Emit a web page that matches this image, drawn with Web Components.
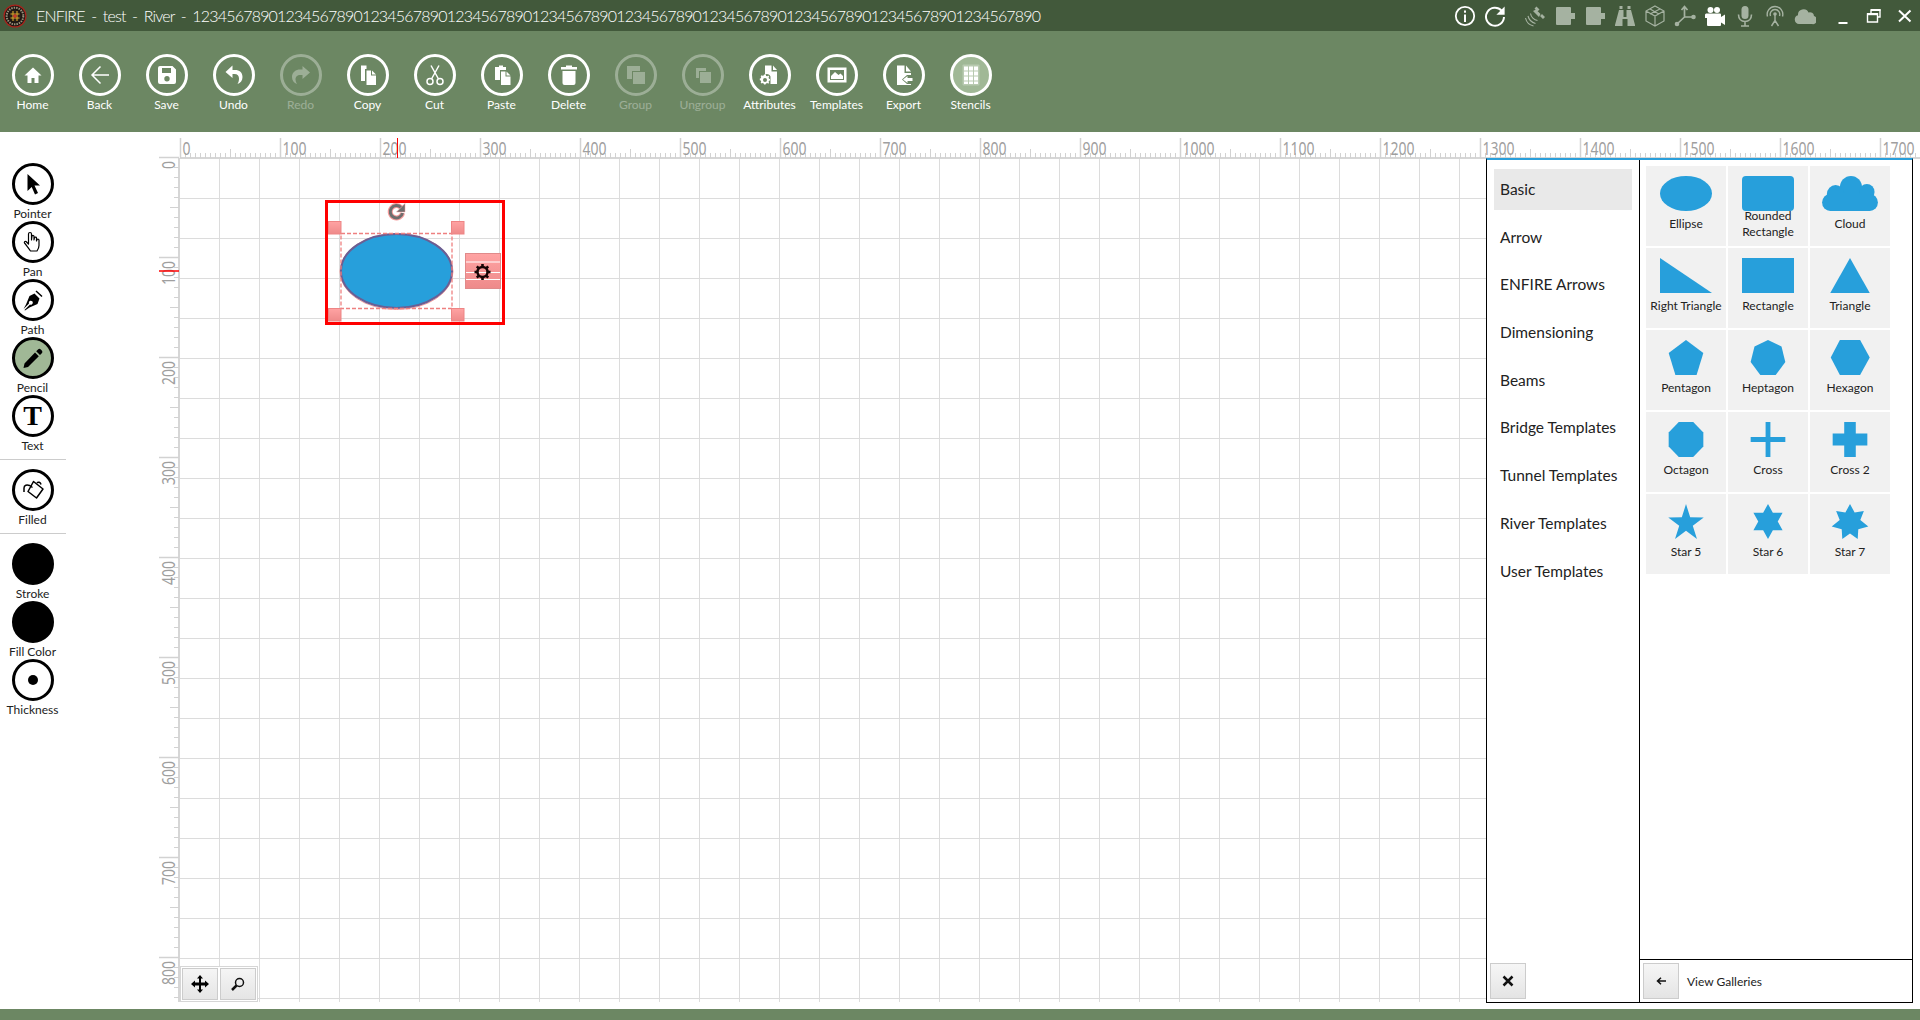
<!DOCTYPE html>
<html>
<head>
<meta charset="utf-8">
<title>ENFIRE</title>
<style>
html, body { margin: 0; height: 100%; overflow: hidden; background: #fff; }
body { display: flex; flex-direction: column; height: 1020px; font-family: Lato, "Noto Sans", sans-serif; color: #222; }
svg { display: block; }
.i { width: 24px; height: 24px; fill: currentColor; }
.s { fill: none; stroke: currentColor; }
.t { width: 22px; height: 22px; fill: currentColor; }
.off { color: #a5b2a1; }
</style>
</head>
<body>

<enfire-titlebar text="ENFIRE - test - River - 1234567890123456789012345678901234567890123456789012345678901234567890123456789012345678901234567890">
  <svg slot="logo" viewBox="0 0 24 24" width="24" height="24">
    <circle cx="12" cy="12" r="11.500" fill="#a8231c"/>
    <circle cx="12" cy="12" r="10.300" fill="#1d1712"/>
    <circle cx="12" cy="12" r="8.300" fill="none" stroke="#9a917d" stroke-width="2" stroke-dasharray="1.500 1"/>
    <circle cx="12" cy="12" r="5.800" fill="#2a211a"/>
    <path d="M7.500 10h9M7.500 14h9M10 7v10M14 7v10" stroke="#d4a72c" stroke-width="1.100"/>
    <circle cx="12" cy="12" r="1.800" fill="#c8372c"/>
  </svg>
  <svg class="t" viewBox="0 0 22 22"><circle class="s" cx="11" cy="11" r="9.200" stroke-width="1.800"/><rect x="10" y="9.500" width="2" height="7.500"/><rect x="10" y="5.500" width="2" height="2.200"/></svg>
  <svg class="t" viewBox="0 0 22 22"><path class="s" stroke-width="2" d="M17.600 5.600A9 9 0 1 0 20 12"/><path d="M20.600 1.500v8.200h-8.200z"/></svg>
  <span style="width:2px"></span>
  <svg class="t off" viewBox="0 0 22 22"><path d="m12.500 1.500 3 3-2 2-3-3zM9 6l3-1.500L16.500 9 15 12zM16 11l2-2 3 3-2 2z"/><g class="s" stroke-width="1.100"><path d="M6.500 8.500c.5 3.500 3.500 6.500 7 7M4 11c1 4 3.500 6.500 7.500 7.500M1.500 13c1 4.500 3.500 7 8 8"/></g></svg>
  <svg class="t off" viewBox="0 0 22 22"><path d="M3 2h13a1 1 0 0 1 1 1v5h4v6h-4v5a1 1 0 0 1-1 1H3a1 1 0 0 1-1-1V3a1 1 0 0 1 1-1z"/></svg>
  <svg class="t off" viewBox="0 0 22 22"><path d="M3 2h13a1 1 0 0 1 1 1v5h4v6h-4v5a1 1 0 0 1-1 1H3a1 1 0 0 1-1-1V3a1 1 0 0 1 1-1z"/></svg>
  <svg class="t off" viewBox="0 0 22 22"><path d="M5.500 1h3v3h-3zM13.500 1h3v3h-3zM5 5h4.500v7h3V5H17l4 15v1h-7.500v-7h-5v7H1v-1z"/></svg>
  <svg class="t off" viewBox="0 0 22 22"><g class="s" stroke-width="1.200"><path d="M11 1l9 5v10l-9 5-9-5V6zM2 6l9 5 9-5M11 11v10M6 4l9 5M16 4 6 9"/></g></svg>
  <svg class="t off" viewBox="0 0 22 22"><g class="s" stroke-width="1.700"><path d="M10.500 12V2M10.500 12 3 19M10.500 12H20M7.500 5l3-3.500L13.500 5"/></g><circle cx="3" cy="19" r="2.300"/><circle cx="19.500" cy="12" r="2.300"/></svg>
  <svg class="t" viewBox="0 0 22 22"><circle cx="6.500" cy="5" r="3"/><circle cx="13" cy="5" r="3"/><path d="M2 8.500h14a1 1 0 0 1 1 1V12l4-2.500V20l-4-2.500V20a1 1 0 0 1-1 1H4a1 1 0 0 1-1-1v-7H1V9.500z"/></svg>
  <svg class="t off" viewBox="0 0 22 22"><rect x="7.500" y="1" width="7" height="13" rx="3.500"/><g class="s" stroke-width="1.600"><path d="M4.500 9.500c0 4 2.500 7 6.500 7s6.500-3 6.500-7M11 16.500V21M7 21h8"/></g></svg>
  <svg class="t off" viewBox="0 0 22 22"><g class="s" stroke-width="1.400"><path d="M3.500 11.500a7.800 7.800 0 1 1 15 0M6.500 11a4.800 4.800 0 1 1 9 0M11 10v8M11 15.500 7.500 21M11 15.500l3.500 5.500"/></g><circle cx="11" cy="9" r="1.800"/></svg>
  <svg class="t off" viewBox="0 0 22 22"><path d="M5 19a4.500 4.500 0 0 1-1-8.800A5.500 5.500 0 0 1 14.500 7.500 4 4 0 0 1 20 11a4 4 0 0 1-2 8z"/></svg>
  <span style="width:4px"></span>
  <svg slot="win" class="t" viewBox="0 0 22 22" style="color:#fff"><rect x="6.500" y="17" width="9" height="2"/></svg>
  <svg slot="win" class="t" viewBox="0 0 22 22" style="color:#fff"><g class="s" stroke-width="1.400"><path d="M8 8V5h9v7h-3M4.500 9h10v8h-10z"/></g><rect x="4" y="8" width="11" height="2.200"/><rect x="8" y="4" width="9.500" height="2"/></svg>
  <svg slot="win" class="t" viewBox="0 0 22 22" style="color:#fff"><path class="s" stroke-width="2" d="M5 5.500 16.500 16.500M16.500 5.500 5 16.500"/></svg>
</enfire-titlebar>

<enfire-toolbar>
  <tool-button label="Home"><svg class="i" viewBox="0 0 24 24"><path d="M12 4.500 3.500 12.500H6.500V20h4v-5h3v5h4v-7.500h3z"/></svg></tool-button>
  <tool-button label="Back"><svg class="i s" viewBox="0 0 24 24" stroke-width="1.500"><path d="M21 12H4.500M12.500 3.500 4 12l8.500 8.500"/></svg></tool-button>
  <tool-button label="Save"><svg class="i" viewBox="0 0 24 24"><path fill-rule="evenodd" d="M5 3h12.500L21 6.500V19a2 2 0 0 1-2 2H5a2 2 0 0 1-2-2V5a2 2 0 0 1 2-2zm2 2v5h9V5zm5 8a2.700 2.700 0 1 0 0 5.400 2.700 2.700 0 0 0 0-5.400z"/></svg></tool-button>
  <tool-button label="Undo"><svg class="i" viewBox="0 0 24 24"><path d="M10.500 2.500 3.500 9l7 6v-4h2c3 0 4.500 2 4.500 4.500 0 2-.5 4-1.500 5.500 3-1 5-3.500 5-7 0-4.500-3-7-7.500-7h-2.500z"/></svg></tool-button>
  <tool-button label="Redo" disabled><svg class="i" viewBox="0 0 24 24"><path d="M13.500 3 21 9.500l-7.500 6.500v-4h-2C8 12 6.500 14 6.500 16.500c0 1.500.5 3 1.500 4.500-3-1-5-3.500-5-7 0-5 4-7.500 8-7.500h2.500z"/></svg></tool-button>
  <tool-button label="Copy"><svg class="i" viewBox="0 0 24 24"><path d="M5 2.500h5.500V6H9v12H5z"/><path d="M10.500 7.500H15v5h5V22h-9.500z"/><path d="M16 7.500l4 4h-4z"/></svg></tool-button>
  <tool-button label="Cut"><svg class="i s" viewBox="0 0 24 24" stroke-width="1.500"><path d="M8 2.500 15.500 16M16 2.500 8.500 16"/><circle cx="7" cy="18.500" r="3"/><circle cx="17" cy="18.500" r="3"/></svg></tool-button>
  <tool-button label="Paste"><svg class="i" viewBox="0 0 24 24"><path d="M9 2.500h4V4h3v3h-6v10H5V4h4z"/><path d="M11 8.500h4.500v5h5V22H11z"/><path d="M16.500 8.500l4 4h-4z"/></svg></tool-button>
  <tool-button label="Delete"><svg class="i" viewBox="0 0 24 24"><path d="M9 2.500h6V4h5v2.500H4V4h5z"/><path d="M5.500 8h13v12a2 2 0 0 1-2 2h-9a2 2 0 0 1-2-2z"/></svg></tool-button>
  <tool-button label="Group" disabled><svg class="i" viewBox="0 0 24 24"><path d="M3 3h13v5H8v8H3z"/><rect x="9" y="9" width="12" height="12"/></svg></tool-button>
  <tool-button label="Ungroup" disabled><svg class="i" viewBox="0 0 24 24"><path d="M5 5h10v3H8v7H5z"/><rect x="9" y="9" width="11" height="11"/></svg></tool-button>
  <tool-button label="Attributes"><svg class="i" viewBox="0 0 24 24"><path d="M7 2.500h6.500v6H19V21h-6.500v-7.500a4 4 0 0 0-5.500-2z"/><path d="M15 2.500l4 4.500h-4z"/><path fill-rule="evenodd" d="M7 13l1.400.3.8-.7 1 1-.6.9.4 1.200 1 .3v1.400l-1 .3-.4 1.200.6.9-1 1-.8-.7-1.400.3-.5 1H5l-.3-1-1.200-.4-.9.6-1-1 .6-.9-.4-1.200-1-.3V15.600l1-.3.4-1.200-.6-.9 1-1 .9.6 1.200-.4.3-1H7zM6 15a2 2 0 1 0 0 4 2 2 0 0 0 0-4z" transform="translate(1 0)"/></svg></tool-button>
  <tool-button label="Templates"><svg class="i" viewBox="0 0 24 24"><path fill-rule="evenodd" d="M2.500 4.500h19v15h-19zM5 7v10h14V7z"/><path d="M6 16v-3l4-4 3.500 3 2-1.500L18 13v3z"/></svg></tool-button>
  <tool-button label="Export"><svg class="i" viewBox="0 0 24 24"><path d="M5 2.500h7.500V10H19v2h-4l-5 4.500 5 4.500h4v1H5z"/><path d="M14 2.500 19 8.500h-5z"/><path d="M11 16.500 15.500 13v2h5v3h-5v2z"/></svg></tool-button>
  <tool-button label="Stencils" active><svg class="i" viewBox="0 0 24 24"><rect x="3.500" y="1.500" width="17" height="21" rx="1" opacity=".25"/><g><rect x="5" y="3.500" width="4" height="4"/><rect x="10" y="3.500" width="4" height="4"/><rect x="15" y="3.500" width="4" height="4"/><rect x="5" y="8.500" width="4" height="4"/><rect x="10" y="8.500" width="4" height="4"/><rect x="15" y="8.500" width="4" height="4"/><rect x="5" y="13.500" width="4" height="4"/><rect x="10" y="13.500" width="4" height="4"/><rect x="15" y="13.500" width="4" height="4"/><rect x="5" y="18.500" width="4" height="2.500"/><rect x="10" y="18.500" width="4" height="2.500"/><rect x="15" y="18.500" width="4" height="2.500"/></g></svg></tool-button>
</enfire-toolbar>

<enfire-workspace>
  <enfire-sidebar slot="side">
    <tool-button dark label="Pointer"><svg class="i" viewBox="0 0 24 24"><path d="M6.500 2 19 13.500h-5.500l3.500 7.500-3 1.500-3.300-7.500L6.500 19z"/></svg></tool-button>
    <tool-button dark label="Pan"><svg class="i" viewBox="0 0 24 24"><path fill="#fff" stroke="#000" stroke-width="1.200" stroke-linejoin="round" d="M9 2.500c1 0 1.500.7 1.500 1.500v6l.5-4c.8-1 2-.6 2 .5V10l.5-2.500c.9-.8 2-.3 2 .7V11l.5-1.500c.9-.7 2-.2 2 .8v5.200c0 2.500-1 4-2 5.500H9.500C8 19 5 14.500 3.500 13c-.6-1 .5-2 1.500-1.500L7.500 14V4c0-1 .6-1.500 1.500-1.500z"/></svg></tool-button>
    <tool-button dark label="Path"><svg class="i" viewBox="0 0 24 24"><path d="M15.500 2.500 21.500 8l-1 1-6-5.500zM13.500 5.500l5 5-2 5.500-8 3.500-4.500 3-.5-.5 5.500-5.500a2 2 0 1 0-1-1L2.500 21 5 16.500l3.500-8.500z"/></svg></tool-button>
    <tool-button dark active label="Pencil"><svg class="i" viewBox="0 0 24 24"><path d="M17 3.500a2 2 0 0 1 2.800 0l1 1a2 2 0 0 1 0 2.800l-1.800 1.700-3.800-3.800zM14 6.500l3.800 3.800L7 21l-4.500 1 1-4.500z"/></svg></tool-button>
    <tool-button dark label="Text"><span style="font:bold 28px/28px 'Liberation Serif',serif;color:#000">T</span></tool-button>
    <hr-line></hr-line>
    <tool-button dark label="Filled"><svg class="i" viewBox="0 0 24 24"><path fill="#fff" stroke="#000" stroke-width="1.500" stroke-linejoin="round" d="M12.500 3.500 22 11l-6.500 9L7 13.500z"/><path class="s" stroke="#000" stroke-width="1.500" d="M3 14V10c0-3 3-3.500 5.500-2.500l3 2M16 5c1-1.500 3.500-1 4 1.500"/></svg></tool-button>
    <hr-line></hr-line>
    <tool-button dark filled label="Stroke"></tool-button>
    <tool-button dark filled label="Fill Color"></tool-button>
    <tool-button dark label="Thickness"><svg viewBox="0 0 10 10" width="10" height="10"><circle cx="5" cy="5" r="5"/></svg></tool-button>
  </enfire-sidebar>

  <drawing-canvas slot="main">
    <selection-frame slot="overlay"></selection-frame>
    <nav-buttons slot="overlay">
      <svg viewBox="0 0 18 18"><path d="M9 0l3 3.500h-2v4h4v-2L18 9l-4 3.500v-2h-4v4h2L9 18l-3-3.500h2v-4H4v2L0 9l4-3.500v2h4v-4H6z"/></svg>
      <svg viewBox="-2 -2 18 18"><g fill="none" stroke="#111"><circle cx="8.500" cy="5.500" r="4" stroke-width="1.500"/><path stroke-width="2.500" d="M5.500 8.500 1 13"/></g></svg>
    </nav-buttons>
    <stencil-panel slot="overlay" active="Basic" items="Basic|Arrow|ENFIRE Arrows|Dimensioning|Beams|Bridge Templates|Tunnel Templates|River Templates|User Templates">
      <stencil-tile label="Ellipse"><svg viewBox="0 0 54 35" preserveAspectRatio="none"><ellipse cx="27" cy="17.500" rx="27" ry="17.500"/></svg></stencil-tile>
      <stencil-tile label="Rounded Rectangle" tight><svg viewBox="0 0 54 35" preserveAspectRatio="none"><rect x="0" width="54" height="35" rx="4"/></svg></stencil-tile>
      <stencil-tile label="Cloud"><svg viewBox="0 0 54 35" preserveAspectRatio="none" style="overflow:visible"><circle cx="28" cy="11.500" r="11.500"/><circle cx="12" cy="18" r="9"/><circle cx="44.500" cy="16" r="8"/><rect x="-2" y="18" width="58" height="17" rx="8.500"/></svg></stencil-tile>
      <stencil-tile label="Right Triangle"><svg viewBox="0 0 54 35" preserveAspectRatio="none"><polygon points="0,0 54,35 0,35"/></svg></stencil-tile>
      <stencil-tile label="Rectangle"><svg viewBox="0 0 54 35" preserveAspectRatio="none"><rect x="0" width="54" height="35"/></svg></stencil-tile>
      <stencil-tile label="Triangle"><svg viewBox="0 0 54 35" preserveAspectRatio="none"><polygon points="27,0 47.500,35 6.500,35"/></svg></stencil-tile>
      <stencil-tile label="Pentagon"><svg viewBox="0 0 54 35" preserveAspectRatio="none"><polygon points="27,0 45,13 38,35 16,35 9,13"/></svg></stencil-tile>
      <stencil-tile label="Heptagon"><svg viewBox="0 0 54 35" preserveAspectRatio="none"><polygon points="27,0 41,6.500 45,22 35,35 19,35 9,22 13,6.500"/></svg></stencil-tile>
      <stencil-tile label="Hexagon"><svg viewBox="0 0 54 35" preserveAspectRatio="none"><polygon points="7,17.500 16.500,0 37.500,0 47.500,17.500 37.500,35 16.500,35"/></svg></stencil-tile>
      <stencil-tile label="Octagon"><svg viewBox="0 0 54 35" preserveAspectRatio="none"><polygon points="19.500,0 34.500,0 45,10.500 45,24.500 34.500,35 19.500,35 9,24.500 9,10.500"/></svg></stencil-tile>
      <stencil-tile label="Cross"><svg viewBox="0 0 54 35" preserveAspectRatio="none"><path d="M24.500 0h5v15H45v5H29.500v15h-5V20H9v-5h15.500z"/></svg></stencil-tile>
      <stencil-tile label="Cross 2"><svg viewBox="0 0 54 35" preserveAspectRatio="none"><path d="M21 0h12v11.500h12v12H33V35H21V23.500H9v-12h12z"/></svg></stencil-tile>
      <stencil-tile label="Star 5"><svg viewBox="0 0 54 35" preserveAspectRatio="none"><polygon points="27,0 31.350,13.360 45.400,13.400 34.040,21.640 38.400,35 27,26.750 15.600,35 19.960,21.640 8.600,13.400 22.650,13.360"/></svg></stencil-tile>
      <stencil-tile label="Star 6"><svg viewBox="0 0 54 35" preserveAspectRatio="none"><polygon points="27,0 32.050,8.750 42.160,8.750 37.100,17.500 42.160,26.250 32.050,26.250 27,35 21.950,26.250 11.840,26.250 16.900,17.500 11.840,8.750 21.950,8.750"/></svg></stencil-tile>
      <stencil-tile label="Star 7"><svg viewBox="0 0 54 35" preserveAspectRatio="none"><polygon points="27,0 31.800,8.500 41.400,6.900 37.700,16 46,22.500 35.600,25.300 35,35 27,29.400 19,35 18.400,25.300 8,22.500 16.300,16 12.600,6.900 22.200,8.500"/></svg></stencil-tile>
    </stencil-panel>
  </drawing-canvas>
</enfire-workspace>

<enfire-footer></enfire-footer>

<script>
const UI_FONT = 'Lato, "Noto Sans", sans-serif';

class EnfireTitlebar extends HTMLElement {
    connectedCallback() {
        this.attachShadow({ mode: 'open' }).innerHTML = `
            <style>
                :host { display: flex; align-items: center; height: 31px; background: #42593b; color: #fff; flex: none; }
                .logo { margin: 0 9px 0 3px; width: 24px; height: 24px; }
                .text { font: 300 16px/31px ${UI_FONT}; letter-spacing: -0.8px; word-spacing: 2.9px; white-space: nowrap; flex: 1; }
                .icons { display: flex; align-items: center; gap: 8px; margin-right: 4px; }
                .win { display: flex; gap: 9px; margin-right: 4px; }
            </style>
            <div class="logo"><slot name="logo"></slot></div>
            <div class="text">${this.getAttribute('text')}</div>
            <div class="icons"><slot></slot></div>
            <div class="win"><slot name="win"></slot></div>
        `;
    }
}

class EnfireToolbar extends HTMLElement {
    connectedCallback() {
        this.attachShadow({ mode: 'open' }).innerHTML = `
            <style>
                :host { display: block; height: 101px; background: #6c8763; color: #fff; flex: none; }
                .row { display: flex; gap: 2px; padding-top: 23px; }
            </style>
            <div class="row"><slot></slot></div>
        `;
    }
}

class ToolButton extends HTMLElement {
    connectedCallback() {
        const label = this.getAttribute('label') || '';
        const line = this.hasAttribute('dark') ? '#000' : '#fff';
        let fill = 'transparent';
        if (this.hasAttribute('active')) fill = '#a0b896';
        if (this.hasAttribute('filled')) fill = '#000';
        this.attachShadow({ mode: 'open' }).innerHTML = `
            <style>
                :host { display: block; width: 65px; height: 58px; color: ${line}; }
                :host([disabled]) { opacity: .33; }
                .ring { box-sizing: border-box; width: 42px; height: 42px; margin: 0 auto; border-radius: 50%;
                        border: 3px solid ${line}; background: ${fill}; display: flex; align-items: center; justify-content: center; }
                .label { margin-top: 1px; height: 15px; font: 12px/16px ${UI_FONT};
                         text-align: center; white-space: nowrap; color: ${this.hasAttribute('dark') ? '#222' : '#fff'}; }
            </style>
            <div class="ring"><slot></slot></div>
            <div class="label">${label}</div>
        `;
    }
}

class HrLine extends HTMLElement {
    connectedCallback() {
        this.attachShadow({ mode: 'open' }).innerHTML = `
            <style>:host { display: block; width: 66px; height: 1px; background: #ccc; margin: 6px 0 9px; }</style>
        `;
    }
}

class EnfireSidebar extends HTMLElement {
    connectedCallback() {
        this.attachShadow({ mode: 'open' }).innerHTML = `
            <style>:host { display: block; width: 66px; flex: none; padding-top: 31px; }</style>
            <slot></slot>
        `;
    }
}

class EnfireWorkspace extends HTMLElement {
    connectedCallback() {
        this.attachShadow({ mode: 'open' }).innerHTML = `
            <style>:host { display: flex; flex: 1; min-height: 0; background: #fff; }</style>
            <slot name="side"></slot>
            <slot name="main"></slot>
        `;
    }
}

class EnfireFooter extends HTMLElement {
    connectedCallback() {
        this.attachShadow({ mode: 'open' }).innerHTML = `
            <style>:host { display: block; height: 11px; background: #6c8763; flex: none; }</style>
        `;
    }
}

// rulers are drawn from numbers so the ticks stay on the 100 unit grid
function rulerMarkup(vertical, length, labels, step) {
    const tick = '#d2d2d2';
    let out = '';
    for (let u = 0; u <= length; u += step) {
        const major = u % 100 === 0;
        const mid = u % 50 === 0;
        const size = major ? 20 : mid ? 9 : 5;
        if (vertical) {
            const y = u - 0.5;
            out += `<line x1="${33 - size}" x2="33" y1="${y}" y2="${y}" stroke="${tick}" stroke-width="${major ? 1.5 : 1}"/>`;
        } else {
            const x = u + 0.5;
            out += `<line x1="${x}" x2="${x}" y1="${26 - size}" y2="26" stroke="${tick}" stroke-width="${major ? 1.5 : 1}"/>`;
        }
    }
    for (let u = 0; u <= labels; u += 100) {
        const len = String(u).length * 8;
        if (vertical) {
            const y = u + 3;
            out += `<text transform="translate(29 ${y}) rotate(-90)" text-anchor="end" textLength="${len}" lengthAdjust="spacingAndGlyphs">${u}</text>`;
        } else {
            out += `<text x="${u + 2.5}" y="23" textLength="${len}" lengthAdjust="spacingAndGlyphs">${u}</text>`;
        }
    }
    return out;
}

class DrawingCanvas extends HTMLElement {
    connectedCallback() {
        this.attachShadow({ mode: 'open' }).innerHTML = `
            <style>
                :host { display: grid; position: relative; flex: 1; min-width: 0; box-sizing: border-box; padding: 0 7px 7px 80px;
                        grid-template-columns: 34px 1fr; grid-template-rows: 27px 1fr; }
                svg { display: block; overflow: visible; }
                text { font: 17.500px "Noto Sans", sans-serif; fill: #9f9f9f; }
                .top { grid-column: 2; grid-row: 1; border-bottom: 2px solid #d6d6d6; height: 25px; margin-right: -7px; overflow: visible; }
                .left { grid-column: 1; grid-row: 2; border-right: 2px solid #d6d6d6; width: 32px; margin-top: -1px; overflow: visible; }
                .surface { grid-column: 2; grid-row: 2; position: relative;
                           background-image: linear-gradient(to left, #dcdcdc 1px, transparent 1px), linear-gradient(to top, #dcdcdc 1px, transparent 1px);
                           background-size: 40px 40px; }
            </style>
            <div class="top"><svg width="1740" height="27">${rulerMarkup(false, 1740, 1700, 5)}<line x1="217.500" x2="217.500" y1="6" y2="26" stroke="#f00"/></svg></div>
            <div class="left"><svg width="34" height="843">${rulerMarkup(true, 840, 800, 10)}<line x1="13" x2="33" y1="113" y2="113" stroke="#f00" stroke-width="1.500"/></svg></div>
            <div class="surface"></div>
            <slot name="overlay"></slot>
        `;
    }
}

class SelectionFrame extends HTMLElement {
    connectedCallback() {
        const handle = (x, y) => `<rect x="${x + .5}" y="${y + .5}" width="12.500" height="12.500" fill="url(#h)" stroke="#ee8585"/>`;
        this.attachShadow({ mode: 'open' }).innerHTML = `
            <style>
                :host { position: absolute; left: 259px; top: 68px; width: 180px; height: 125px; }
                svg { display: block; overflow: visible; }
            </style>
            <svg width="180" height="125" viewBox="0 0 180 125">
                <defs><linearGradient id="h" x1="0" y1="0" x2="0" y2="1"><stop offset="0" stop-color="#ffa3a3"/><stop offset="1" stop-color="#ee8a8a"/></linearGradient></defs>
                <ellipse cx="71.500" cy="71.500" rx="56.500" ry="38" fill="none" stroke="#f59a9a" stroke-width="1"/>
                <ellipse cx="71.500" cy="71" rx="55.500" ry="37" fill="#279fdb" stroke="#6a5f94" stroke-width="2"/>
                <rect x="16" y="33.500" width="111" height="75" fill="none" stroke="#ee8080" stroke-width="1.300" stroke-dasharray="4 2"/>
                <rect x="1.500" y="1.500" width="177" height="122" fill="none" stroke="#f00" stroke-width="3"/>
                ${handle(3, 21)}${handle(126, 21)}${handle(3, 108)}${handle(126, 108)}
                <path d="M76 7.500A6.200 6.200 0 1 0 77.500 13" fill="none" stroke="#f59a9a" stroke-width="5"/>
                <path d="M76 7.500A6.200 6.200 0 1 0 77.500 13" fill="none" stroke="#6e6e6e" stroke-width="3"/>
                <path d="M80 3.500v8.500h-8.500z" fill="#6e6e6e" stroke="#f59a9a" stroke-width=".5"/>
                <rect x="140.500" y="53.500" width="35" height="35" fill="url(#h)" stroke="#e08a8a"/>
                <path d="M141 62h34M141 72.500h34M141 79.500h34" stroke="#fff" stroke-width="1"/>
                <g transform="translate(157.500 72)">
                    <circle r="5" fill="none" stroke="#160404" stroke-width="2.500"/>
                    <path d="M0-8v3M0 8V5M-8 0h3M8 0H5M-5.700-5.700l2 2M5.700 5.700l-2-2M5.700-5.700l-2 2M-5.700 5.700l2-2" stroke="#160404" stroke-width="2.600"/>
                </g>
            </svg>
        `;
    }
}

class NavButtons extends HTMLElement {
    connectedCallback() {
        this.attachShadow({ mode: 'open' }).innerHTML = `
            <style>
                :host { position: absolute; left: 114px; bottom: 7px; display: flex; gap: 2px; padding: 1px; border: 1px solid #d6d6d6; background: #fff; }
                ::slotted(svg) { box-sizing: content-box; width: 18px; height: 18px; padding: 6px 8px; border: 1px solid #ccc; background: linear-gradient(#f5f5f5, #e5e5e5); }
            </style>
            <slot></slot>
        `;
    }
}

class StencilPanel extends HTMLElement {
    connectedCallback() {
        const active = this.getAttribute('active');
        const items = this.getAttribute('items').split('|')
            .map(name => `<div class="item${name === active ? ' on' : ''}">${name}</div>`).join('');
        this.attachShadow({ mode: 'open' }).innerHTML = `
            <style>
                :host { position: absolute; right: 7px; top: 26px; bottom: 6px; width: 427px; box-sizing: border-box; display: flex;
                        background: #fff; border: 1px solid #000; border-top: 2px solid #2a9fdb; font-family: ${UI_FONT}; color: #222; }
                .cats { width: 152px; flex: none; border-right: 1px solid #000; display: flex; flex-direction: column; padding-top: 9px; }
                .item { height: 41px; margin: 0 7px 6.700px; padding-left: 6px; font-size: 15.500px; line-height: 40px; }
                .item.on { background: #e9e9e9; }
                .gallery { flex: 1; display: flex; flex-direction: column; }
                .grid { flex: 1; display: grid; grid-template-columns: repeat(3, 80px); grid-auto-rows: 80px; gap: 2px; padding: 6px 0 0 6px; align-content: start; }
                .foot { height: 42px; border-top: 1px solid #000; display: flex; align-items: center; padding: 0 3px; gap: 8px; font-size: 12px; }
                .btn { box-sizing: border-box; width: 36px; height: 36px; border: 1px solid #ccc; background: linear-gradient(#f6f6f6, #e4e4e4);
                       display: flex; align-items: center; justify-content: center; flex: none; }
                .close { margin: auto 0 3px 3px; }
            </style>
            <div class="cats">${items}
                <div class="btn close"><svg width="12" height="12" viewBox="0 0 12 12"><path d="M1.500 1.500l9 9M10.500 1.500l-9 9" stroke="#111" stroke-width="2.500" fill="none"/></svg></div>
            </div>
            <div class="gallery">
                <div class="grid"><slot></slot></div>
                <div class="foot">
                    <div class="btn"><svg width="10" height="8" viewBox="0 0 10 8"><path d="M10 4H2M5 .8 1.500 4 5 7.200" stroke="#111" stroke-width="1.500" fill="none"/></svg></div>
                    <span>View Galleries</span>
                </div>
            </div>
        `;
    }
}

class StencilTile extends HTMLElement {
    connectedCallback() {
        const tight = this.hasAttribute('tight');
        this.attachShadow({ mode: 'open' }).innerHTML = `
            <style>
                :host { display: block; background: #f1f1f1; width: 80px; height: 80px; box-sizing: border-box; padding-top: 10px; }
                .shape { width: 52px; height: 35px; margin: 0 auto; }
                .label { color: #222; font: 12px/16px ${UI_FONT}; text-align: center; margin-top: ${tight ? -3 : 5}px; position: relative; }
                ::slotted(svg) { display: block; width: 52px; height: 35px; fill: #279fdb; }
            </style>
            <div class="shape"><slot></slot></div>
            <div class="label">${this.getAttribute('label')}</div>
        `;
    }
}

customElements.define('enfire-titlebar', EnfireTitlebar);
customElements.define('enfire-toolbar', EnfireToolbar);
customElements.define('tool-button', ToolButton);
customElements.define('hr-line', HrLine);
customElements.define('enfire-sidebar', EnfireSidebar);
customElements.define('enfire-workspace', EnfireWorkspace);
customElements.define('enfire-footer', EnfireFooter);
customElements.define('drawing-canvas', DrawingCanvas);
customElements.define('selection-frame', SelectionFrame);
customElements.define('nav-buttons', NavButtons);
customElements.define('stencil-panel', StencilPanel);
customElements.define('stencil-tile', StencilTile);
</script>
</body>
</html>
